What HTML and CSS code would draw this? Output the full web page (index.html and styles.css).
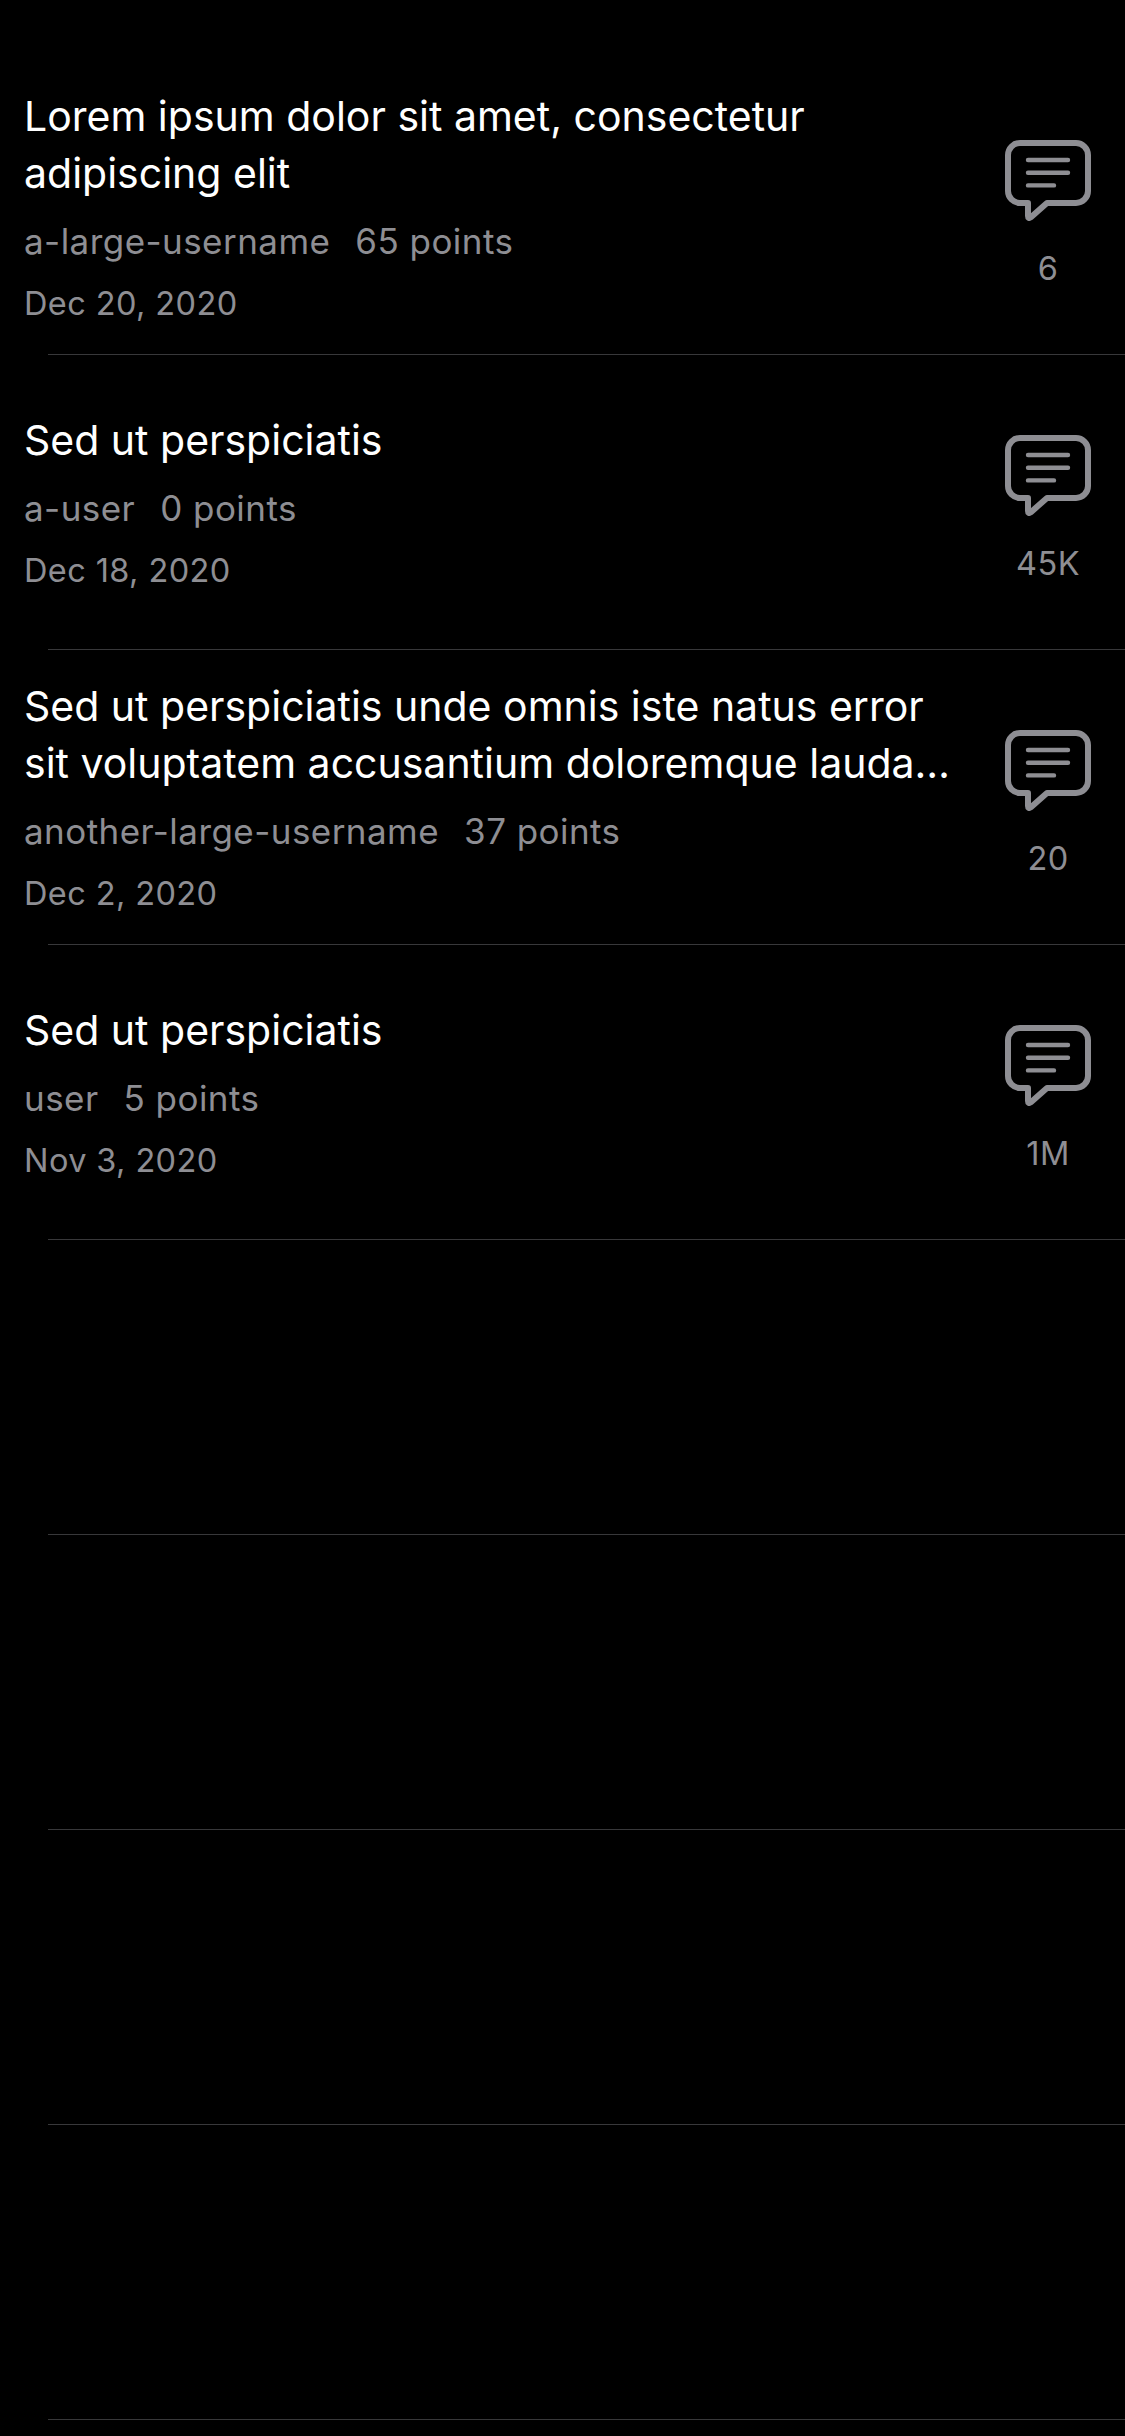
FILE: index.html
```
<!DOCTYPE html>
<html lang="en">
<head>
<meta charset="utf-8">
<title>Posts</title>
<link rel="stylesheet" href="styles.css">
</head>
<body>
<svg class="defs" width="0" height="0" aria-hidden="true">
  <symbol id="comments" viewBox="0 0 86 81">
    <path d="M15 3H71A12 12 0 0 1 83 15V51A12 12 0 0 1 71 63H42L25.6 77.4Q23 79.2 23 76V63H15A12 12 0 0 1 3 51V15A12 12 0 0 1 15 3Z" fill="none" stroke="currentColor" stroke-width="6" stroke-linejoin="round"/>
    <path d="M23 20H63M23 32.7H63M23 45.4H49" fill="none" stroke="currentColor" stroke-width="4.4" stroke-linecap="round"/>
  </symbol>
</svg>
<main class="list">
  <article class="row">
    <div class="post">
      <h2 class="title">Lorem ipsum dolor sit amet, consectetur<br>adipiscing elit</h2>
      <div class="meta"><span>a-large-username</span><span>65 points</span></div>
      <time class="date">Dec 20, 2020</time>
    </div>
    <div class="replies"><svg class="icon"><use href="#comments"/></svg><span class="count">6</span></div>
  </article>
  <article class="row">
    <div class="post">
      <h2 class="title">Sed ut perspiciatis</h2>
      <div class="meta"><span>a-user</span><span>0 points</span></div>
      <time class="date">Dec 18, 2020</time>
    </div>
    <div class="replies"><svg class="icon"><use href="#comments"/></svg><span class="count">45K</span></div>
  </article>
  <article class="row">
    <div class="post">
      <h2 class="title">Sed ut perspiciatis unde omnis iste natus error<br>sit voluptatem accusantium doloremque lauda…</h2>
      <div class="meta"><span>another-large-username</span><span>37 points</span></div>
      <time class="date">Dec 2, 2020</time>
    </div>
    <div class="replies"><svg class="icon"><use href="#comments"/></svg><span class="count">20</span></div>
  </article>
  <article class="row">
    <div class="post">
      <h2 class="title">Sed ut perspiciatis</h2>
      <div class="meta"><span>user</span><span>5 points</span></div>
      <time class="date">Nov 3, 2020</time>
    </div>
    <div class="replies"><svg class="icon"><use href="#comments"/></svg><span class="count">1M</span></div>
  </article>
  <div class="row"></div>
  <div class="row"></div>
  <div class="row"></div>
  <div class="row"></div>
</main>
</body>
</html>
```
FILE: styles.css
```
* { box-sizing: border-box; }

body {
  margin: 0;
  background: #000;
  color: #fff;
  font-family: Inter, "Liberation Sans", sans-serif;
}

.defs { display: block; }

.list {
  height: 2436px;
  padding-top: 60px;
  overflow: hidden;
}

.row {
  display: flex;
  align-items: center;
  justify-content: space-between;
  height: 295px;
  padding-bottom: 1px;
  background: linear-gradient(#38383a, #38383a) 48px 100% / 100% 1px no-repeat;
}

.post {
  display: flex;
  flex-direction: column;
  gap: 14px;
  padding-left: 24px;
  white-space: nowrap;
}

.title {
  margin: 0;
  font-size: 41px;
  font-weight: 400;
  line-height: 57px;
}

.meta {
  display: flex;
  gap: 25px;
  color: #8e8e93;
  font-size: 35px;
  letter-spacing: 0.45px;
  line-height: 50px;
}

.date,
.count {
  margin-bottom: -2px;
  color: #8e8e93;
  font-size: 32.5px;
  letter-spacing: 0.4px;
  line-height: 48px;
}

.replies {
  display: flex;
  flex-direction: column;
  align-items: center;
  gap: 24px;
  width: 154px;
  padding-top: 16px;
  color: #8e8e93;
}

.icon {
  width: 86px;
  height: 81px;
}
```
